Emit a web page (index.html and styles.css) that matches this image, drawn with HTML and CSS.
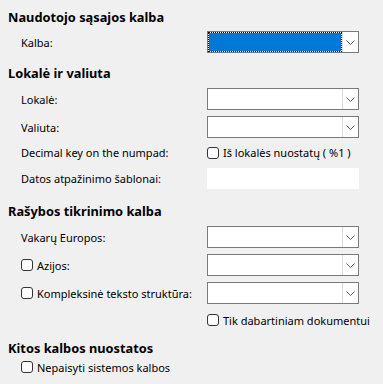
FILE: index.html
```html
<!DOCTYPE html>
<html lang="lt">
<head>
  <meta charset="UTF-8" />
  <title>Kalbos nuostatos</title>
  <link rel="stylesheet" href="styles.css">
</head>
<body>
  <div class="section first">
    <div class="heading">Naudotojo sąsajos kalba</div>
    <div class="rows">
      <div class="row">
        <span class="label">Kalba:</span>
        <div class="combo selected">
          <div class="combo-value"></div>
          <div class="combo-btn"><svg width="9" height="5" viewBox="0 0 9 5"><polyline points="0.5,0.5 4.5,4.5 8.5,0.5" /></svg></div>
        </div>
      </div>
    </div>
  </div>

  <div class="section second">
    <div class="heading">Lokalė ir valiuta</div>
    <div class="rows">
      <div class="row">
        <span class="label">Lokalė:</span>
        <div class="combo">
          <div class="combo-value"></div>
          <div class="combo-btn"><svg width="9" height="5" viewBox="0 0 9 5"><polyline points="0.5,0.5 4.5,4.5 8.5,0.5" /></svg></div>
        </div>
      </div>
      <div class="row">
        <span class="label">Valiuta:</span>
        <div class="combo">
          <div class="combo-value"></div>
          <div class="combo-btn"><svg width="9" height="5" viewBox="0 0 9 5"><polyline points="0.5,0.5 4.5,4.5 8.5,0.5" /></svg></div>
        </div>
      </div>
      <div class="row short">
        <span class="label">Decimal key on the numpad:</span>
        <label class="check"><span class="box"></span>Iš lokalės nuostatų ( %1 )</label>
      </div>
      <div class="row">
        <span class="label">Datos atpažinimo šablonai:</span>
        <div class="field"></div>
      </div>
    </div>
  </div>

  <div class="section third">
    <div class="heading">Rašybos tikrinimo kalba</div>
    <div class="rows">
      <div class="row">
        <span class="label">Vakarų Europos:</span>
        <div class="combo">
          <div class="combo-value"></div>
          <div class="combo-btn"><svg width="9" height="5" viewBox="0 0 9 5"><polyline points="0.5,0.5 4.5,4.5 8.5,0.5" /></svg></div>
        </div>
      </div>
      <div class="row">
        <label class="check label"><span class="box"></span>Azijos:</label>
        <div class="combo">
          <div class="combo-value"></div>
          <div class="combo-btn"><svg width="9" height="5" viewBox="0 0 9 5"><polyline points="0.5,0.5 4.5,4.5 8.5,0.5" /></svg></div>
        </div>
      </div>
      <div class="row">
        <label class="check label"><span class="box"></span>Kompleksinė teksto struktūra:</label>
        <div class="combo">
          <div class="combo-value"></div>
          <div class="combo-btn"><svg width="9" height="5" viewBox="0 0 9 5"><polyline points="0.5,0.5 4.5,4.5 8.5,0.5" /></svg></div>
        </div>
      </div>
      <div class="row tik">
        <span class="label"></span>
        <label class="check"><span class="box"></span>Tik dabartiniam dokumentui</label>
      </div>
    </div>
  </div>

  <div class="section fourth">
    <div class="heading">Kitos kalbos nuostatos</div>
    <div class="rows">
      <div class="row solo">
        <label class="check"><span class="box"></span>Nepaisyti sistemos kalbos</label>
      </div>
    </div>
  </div>
</body>
</html>
```

FILE: styles.css
```css
body {
    margin: 0;
    padding: 8px 0 0 8px;
    background-color: #f0f0f0;
    font-family: "Noto Sans", "Open Sans", sans-serif;
    font-size: 11px;
    color: #000;
    width: 375px;
    height: 376px;
    overflow: hidden;
}
.heading {
    font-weight: bold;
    font-size: 12.8px;
    line-height: 18px;
    height: 18px;
}
.second {
    margin-top: 11px;
}
.third {
    margin-top: 13px;
}
.fourth {
    margin-top: 9px;
}
.rows {
    display: flex;
    flex-direction: column;
    gap: 6px;
    margin-top: 6px;
    padding-left: 13px;
}
.first .rows {
    margin-top: 5px;
}
.fourth .rows {
    margin-top: 1px;
}
.row {
    display: grid;
    grid-template-columns: 186px 152px;
    align-items: center;
    height: 22px;
}
.row.short {
    height: 17px;
}
.row.tik {
    height: 20px;
}
.row.solo {
    display: flex;
    height: 18px;
}
.label {
    white-space: nowrap;
}
.combo {
    display: flex;
    height: 22px;
    box-sizing: border-box;
    border: 1px solid #7a7a7a;
    background-color: #fff;
}
.combo-value {
    flex: 1;
}
.combo.selected .combo-value {
    background-color: #0078d7;
    outline: 1px dotted #000;
    outline-offset: -1px;
    border: 1px solid #fff;
}
.combo-btn {
    width: 16px;
    box-sizing: border-box;
    border-left: 1px solid #dcdcdc;
    display: flex;
    align-items: center;
    justify-content: center;
}
.combo-btn svg polyline {
    fill: none;
    stroke: #606060;
    stroke-width: 1;
}
.field {
    height: 21px;
    background-color: #fff;
}
.check {
    display: flex;
    align-items: center;
    white-space: nowrap;
}
.box {
    width: 12px;
    height: 12px;
    box-sizing: border-box;
    border: 1px solid #333;
    border-radius: 3px;
    background-color: #fff;
    margin-right: 4px;
    flex: none;
}
```
